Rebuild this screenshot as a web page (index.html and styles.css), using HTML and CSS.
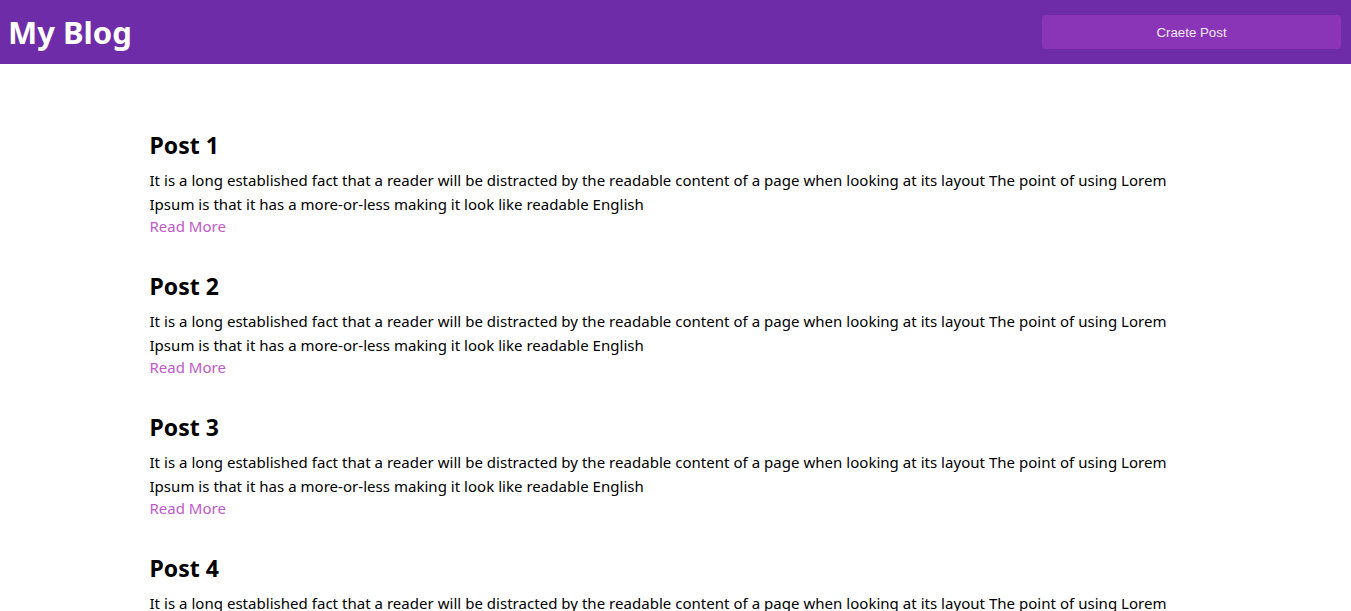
FILE: index.html
```html
<!DOCTYPE html>
<html>
<head>
<meta charset="utf-8">
<link rel="stylesheet" href="styles.css">
</head>
<body>
<header class="topbar">
  <h1 class="brand">My Blog</h1>
  <button class="create-btn">Craete Post</button>
</header>
<main class="posts">
  <article class="post">
    <h2 class="post-title">Post 1</h2>
    <p class="post-body">It is a long established fact that a reader will be distracted by the readable content of a page when looking at its layout The point of using Lorem Ipsum is that it has a more-or-less making it look like readable English</p>
    <a class="read-more" href="#">Read More</a>
  </article>
  <article class="post">
    <h2 class="post-title">Post 2</h2>
    <p class="post-body">It is a long established fact that a reader will be distracted by the readable content of a page when looking at its layout The point of using Lorem Ipsum is that it has a more-or-less making it look like readable English</p>
    <a class="read-more" href="#">Read More</a>
  </article>
  <article class="post">
    <h2 class="post-title">Post 3</h2>
    <p class="post-body">It is a long established fact that a reader will be distracted by the readable content of a page when looking at its layout The point of using Lorem Ipsum is that it has a more-or-less making it look like readable English</p>
    <a class="read-more" href="#">Read More</a>
  </article>
  <article class="post">
    <h2 class="post-title">Post 4</h2>
    <p class="post-body">It is a long established fact that a reader will be distracted by the readable content of a page when looking at its layout The point of using Lorem Ipsum is that it has a more-or-less making it look like readable English</p>
    <a class="read-more" href="#">Read More</a>
  </article>
</main>
</body>
</html>
```

FILE: styles.css
```css
html, body {
  margin: 0;
  padding: 0;
  background: #ffffff;
}
body {
  font-family: "Noto Sans", "Open Sans", sans-serif;
  color: #000;
}
.topbar {
  height: 64px;
  background: #6f2ca8;
  display: flex;
  align-items: center;
  justify-content: space-between;
  padding: 0 10px 0 8px;
}
.brand {
  margin: 0;
  color: #fff;
  font-size: 31px;
  font-weight: 700;
  line-height: 40px;
}
.create-btn {
  width: 299px;
  height: 34px;
  border: none;
  border-radius: 4px;
  background: #8a35b8;
  color: #f3e9f7;
  font-family: "Liberation Sans", Arial, sans-serif;
  font-size: 13.3px;
}
.posts {
  max-width: 1052px;
  margin: 0 auto;
  padding-top: 67px;
}
.post {
  display: flex;
  flex-direction: column;
  align-items: flex-start;
  padding-bottom: 36px;
}
.post-title {
  margin: 0;
  font-size: 23px;
  line-height: 29px;
  font-weight: 700;
}
.post-body {
  margin: 8px 0 0;
  font-size: 15px;
  line-height: 24px;
  letter-spacing: 0.03px;
}
.read-more {
  color: #c05ac9;
  text-decoration: none;
  font-size: 15px;
  line-height: 20px;
}
```
